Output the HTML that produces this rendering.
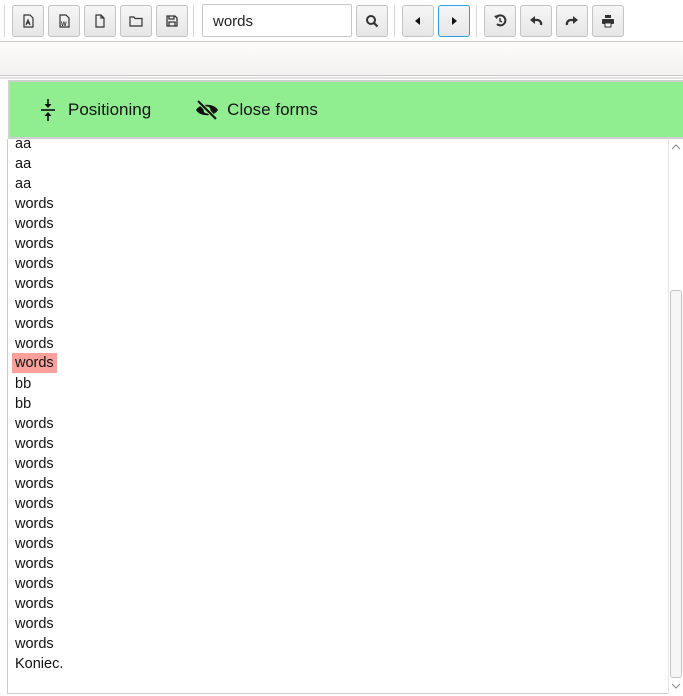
<!DOCTYPE html>
<html><head><style>
*{box-sizing:border-box;margin:0;padding:0}
body{width:683px;height:696px;overflow:hidden;background:#fff;font-family:"Liberation Sans",sans-serif;position:relative;color:#111}
.tb{position:absolute;left:0;top:0;width:683px;height:42px;background:#fff;border-bottom:1px solid #c8c8c8}
.b{position:absolute;top:5px;width:32px;height:32px;border:1px solid #c4c4c4;border-radius:3px;background:linear-gradient(#f6f6f6,#e6e6e6);display:flex;align-items:center;justify-content:center}
.b svg{width:14px;height:14px}
.sep{position:absolute;top:5px;width:1px;height:32px;background:#d8d8d8}
.inp{position:absolute;left:202px;top:4px;width:150px;height:33px;border:1px solid #c8c8c8;border-radius:2px;font-size:15px;padding:8px 10px;color:#222}
.bar2{position:absolute;left:0;top:42px;width:683px;height:34px;background:linear-gradient(#fdfcfb,#f4f2f1);border-bottom:1px solid #c8c8c8}
.line2{position:absolute;left:0;top:77px;width:683px;height:2px;background:#e2e2e2}
.green{position:absolute;left:8px;top:80px;width:675px;height:59px;background:#90ee90;border:2px solid #d0d0d0;border-right:none;display:flex;align-items:center;font-size:17px;color:#111}
.content{position:absolute;left:7px;top:139px;width:661px;height:555px;border-left:1px solid #ccc;border-bottom:1px solid #ccc;overflow:hidden}
.ln{position:absolute;left:7px;font-size:14.5px;height:20px;line-height:20px}
.hl{background:#f9a09a;left:4px;padding:0 3px}
.sb{position:absolute;left:668px;top:139px;width:15px;height:555px;background:#fff;border-left:1px solid #e6e6e6}
.thumb{position:absolute;left:1px;top:151px;width:12px;height:388px;border:1px solid #c4c4c4;border-radius:3px;background:#f6f6f6}
</style></head><body>
<div class="tb">
<div class="sep" style="left:4px"></div>
<div class="b" style="left:12px"><svg viewBox="0 0 14 14"><path d="M3 1h6l3 3v9H3z M5 11l2-5 2 5M5 9h4" fill="none" stroke="#333" stroke-width="1.2"/></svg></div>
<div class="b" style="left:48px"><svg viewBox="0 0 14 14"><path d="M3 1h6l3 3v9H3z" fill="none" stroke="#333" stroke-width="1.2"/><text x="4" y="12" font-size="6" font-weight="bold" fill="#333">W</text></svg></div>
<div class="b" style="left:84px"><svg viewBox="0 0 14 14"><path d="M3 1h5l3 3v9H3zM8 1v3h3" fill="none" stroke="#333" stroke-width="1.2"/></svg></div>
<div class="b" style="left:120px"><svg viewBox="0 0 14 14"><path d="M1 3h4l1 1.5h7V12H1z" fill="none" stroke="#333" stroke-width="1.2"/></svg></div>
<div class="b" style="left:156px"><svg viewBox="0 0 14 14"><path d="M2 2h8l2 2v8H2zM4 2v3h5V2M4 12V8h6v4" fill="none" stroke="#333" stroke-width="1.3"/></svg></div>
<div class="sep" style="left:193px"></div>
<div class="inp">words</div>
<div class="b" style="left:356px"><svg viewBox="0 0 14 14"><circle cx="6" cy="6" r="4" fill="none" stroke="#333" stroke-width="2"/><path d="M9 9l3.5 3.5" stroke="#333" stroke-width="2.2"/></svg></div>
<div class="sep" style="left:394px"></div>
<div class="b" style="left:402px"><svg viewBox="0 0 14 14"><path d="M9 3v8L4 7z" fill="#111"/></svg></div>
<div class="b" style="left:438px;border:1.5px solid #2aa0e0"><svg viewBox="0 0 14 14"><path d="M5 3v8l5-4z" fill="#111"/></svg></div>
<div class="sep" style="left:476px"></div>
<div class="b" style="left:484px"><svg viewBox="0 0 14 14"><path d="M3 4a5 5 0 1 1 1 6" fill="none" stroke="#333" stroke-width="2"/><path d="M1 2l3 3 1-4z" fill="#333"/><path d="M7 4v3l2 1" stroke="#333" stroke-width="1.5" fill="none"/></svg></div>
<div class="b" style="left:520px"><svg viewBox="0 0 14 14"><path d="M1 6l5-4v8z" fill="#333"/><path d="M5 6h3a4 4 0 0 1 4 5" fill="none" stroke="#333" stroke-width="2.3"/></svg></div>
<div class="b" style="left:556px"><svg viewBox="0 0 14 14"><path d="M13 6l-5-4v8z" fill="#333"/><path d="M9 6H6a4 4 0 0 0-4 5" fill="none" stroke="#333" stroke-width="2.3"/></svg></div>
<div class="b" style="left:592px"><svg viewBox="0 0 14 14"><path d="M4 1h6v3H4z" fill="#333"/><rect x="1" y="5" width="12" height="5" rx="1" fill="#333"/><rect x="4" y="9" width="6" height="4" fill="#fff" stroke="#333"/></svg></div>
</div>
<div class="bar2"></div>
<div class="line2"></div>
<div class="green">
<svg style="margin-left:30px" width="16" height="24" viewBox="0 0 16 24"><path d="M8 1v5" stroke="#111" stroke-width="1.6"/><path d="M4.5 6h7L8 10z" fill="#111"/><path d="M1 12h14" stroke="#111" stroke-width="1.6"/><path d="M4.5 18h7L8 14z" fill="#111"/><path d="M8 18v5" stroke="#111" stroke-width="1.6"/></svg>
<span style="margin-left:12px">Positioning</span>
<svg style="margin-left:44px" width="24" height="20" viewBox="0 0 24 20"><path d="M1 10C5 3 19 3 23 10 19 17 5 17 1 10z" fill="#111"/><circle cx="12" cy="10" r="3.5" fill="#90ee90"/><path d="M3 1l18 18" stroke="#90ee90" stroke-width="4"/><path d="M3 1l18 18" stroke="#111" stroke-width="2"/></svg>
<span style="margin-left:8px">Close forms</span>
</div>
<div class="content">
<div class="ln" style="top:-5px">aa</div>
<div class="ln" style="top:15px">aa</div>
<div class="ln" style="top:35px">aa</div>
<div class="ln" style="top:55px">words</div>
<div class="ln" style="top:75px">words</div>
<div class="ln" style="top:95px">words</div>
<div class="ln" style="top:115px">words</div>
<div class="ln" style="top:135px">words</div>
<div class="ln" style="top:155px">words</div>
<div class="ln" style="top:175px">words</div>
<div class="ln" style="top:195px">words</div>
<div class="ln hl" style="top:214px;line-height:21px">words</div>
<div class="ln" style="top:235px">bb</div>
<div class="ln" style="top:255px">bb</div>
<div class="ln" style="top:275px">words</div>
<div class="ln" style="top:295px">words</div>
<div class="ln" style="top:315px">words</div>
<div class="ln" style="top:335px">words</div>
<div class="ln" style="top:355px">words</div>
<div class="ln" style="top:375px">words</div>
<div class="ln" style="top:395px">words</div>
<div class="ln" style="top:415px">words</div>
<div class="ln" style="top:435px">words</div>
<div class="ln" style="top:455px">words</div>
<div class="ln" style="top:475px">words</div>
<div class="ln" style="top:495px">words</div>
<div class="ln" style="top:515px">Koniec.</div>
</div>
<div class="sb">
<svg style="position:absolute;left:2px;top:5px" width="10" height="6"><path d="M1 5l4-4 4 4" stroke="#888" fill="none"/></svg>
<div class="thumb"></div>
<svg style="position:absolute;left:2px;top:544px" width="10" height="6"><path d="M1 1l4 4 4-4" stroke="#888" fill="none"/></svg>
</div>
</body></html>
